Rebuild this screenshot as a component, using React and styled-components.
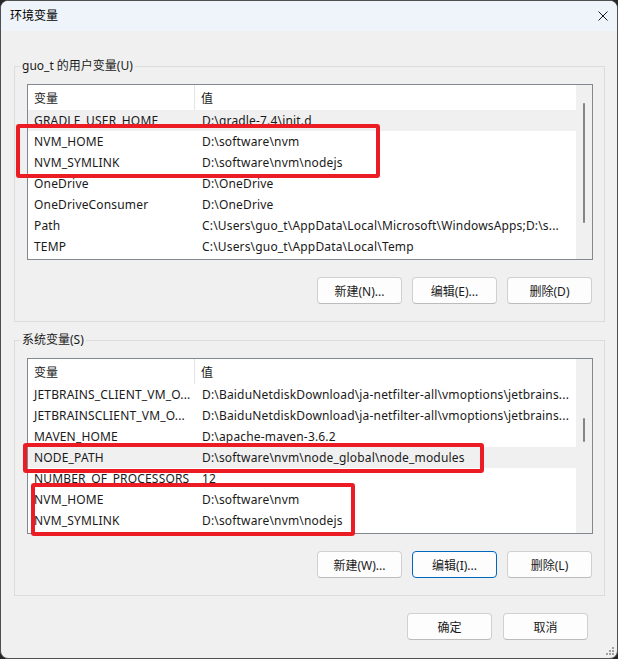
import React from "react";
import styled, { createGlobalStyle } from "styled-components";

const GlobalStyle = createGlobalStyle`
html, body {
    margin:0;
    padding:0;
    background:#262626;
}
body {
    font-family:"Noto Sans", "Noto Sans CJK SC", sans-serif;
    font-size:12px;
    color:#1a1a1a;
}
`;

const Window = styled.div`
position:relative;
box-sizing:border-box;
width:618px;
height:659px;
border:1px solid #4f4f4f;
border-radius:8px;
background:#f0f0f0;
overflow:hidden;
display:flex;
flex-direction:column;
`;

const TitleBar = styled.div`
height:30px;
flex:none;
background:#eef4f9;
display:flex;
align-items:center;
justify-content:space-between;
padding:0 9px;
`;

const Title = styled.span`
font-size:12px;
line-height:16px;
color:#000;
`;

const Content = styled.div`
padding:27px 12px 0 13px;
display:flex;
flex-direction:column;
`;

const Group = styled.fieldset`
margin:${({$gap})=>$gap}px 0 0 0;
padding:0;
min-width:0;
border:1px solid #dcdcdc;
`;

const Legend = styled.legend`
margin-left:5px;
padding:0 2px;
font-size:12px;
line-height:16px;
color:#1a1a1a;
`;

const GroupBody = styled.div`
padding:10px 11px 17px 12px;
display:flex;
flex-direction:column;
`;

const List = styled.div`
box-sizing:border-box;
height:176px;
border:1px solid #828790;
background:#fff;
display:flex;
`;

const ListArea = styled.div`
flex:1;
overflow:hidden;
`;

const Header = styled.div`
height:25px;
display:grid;
grid-template-columns:167px 1fr;
align-items:stretch;
`;

const HeaderCell = styled.div`
display:flex;
align-items:center;
padding-left:6px;
border-right:${({$divider})=>$divider?'1px solid #e5e5e5':'none'};
`;

const Row = styled.div`
height:21px;
display:grid;
grid-template-columns:168px 1fr;
align-items:center;
background:${({$active})=>$active?'#f0f0f0':'transparent'};
`;

const Cell = styled.span`
padding-left:6px;
white-space:nowrap;
overflow:hidden;
line-height:21px;
letter-spacing:0.17px;
`;

const ScrollTrack = styled.div`
width:16px;
flex:none;
background:#f0f0f0;
`;

const Thumb = styled.div`
width:2px;
margin:${({$top})=>$top}px auto 0;
height:${({$size})=>$size}px;
border-radius:1px;
background:#858585;
`;

const ButtonRow = styled.div`
display:flex;
justify-content:flex-end;
gap:${({$gap})=>$gap||10}px;
margin-top:17px;
padding-right:${({$right})=>$right||1}px;
`;

const Button = styled.button`
box-sizing:border-box;
width:85px;
height:27px;
padding:0;
font-family:inherit;
font-size:12px;
color:#1a1a1a;
background:#fdfdfd;
border:1px solid ${({$focus})=>$focus?'#0067c0':'#d0d0d0'};
border-bottom-color:${({$focus})=>$focus?'#0067c0':'#bcbcbc'};
border-radius:4px;
`;

const Footer = styled(ButtonRow)`
margin-top:17px;
`;

const Mark = styled.div`
position:absolute;
box-sizing:border-box;
left:${({$x})=>$x-1}px;
top:${({$y})=>$y-1}px;
width:${({$w})=>$w}px;
height:${({$h})=>$h}px;
border:4px solid #ec1c24;
border-radius:3px;
pointer-events:none;
`;

const Grip = styled.svg`
position:absolute;
right:2px;
bottom:2px;
`;

const userVars = [
    ['GRADLE_USER_HOME', 'D:\\gradle-7.4\\init.d', true],
    ['NVM_HOME', 'D:\\software\\nvm'],
    ['NVM_SYMLINK', 'D:\\software\\nvm\\nodejs'],
    ['OneDrive', 'D:\\OneDrive'],
    ['OneDriveConsumer', 'D:\\OneDrive'],
    ['Path', 'C:\\Users\\guo_t\\AppData\\Local\\Microsoft\\WindowsApps;D:\\s...'],
    ['TEMP', 'C:\\Users\\guo_t\\AppData\\Local\\Temp'],
];

const sysVars = [
    ['JETBRAINS_CLIENT_VM_O...', 'D:\\BaiduNetdiskDownload\\ja-netfilter-all\\vmoptions\\jetbrains...'],
    ['JETBRAINSCLIENT_VM_O...', 'D:\\BaiduNetdiskDownload\\ja-netfilter-all\\vmoptions\\jetbrains...'],
    ['MAVEN_HOME', 'D:\\apache-maven-3.6.2'],
    ['NODE_PATH', 'D:\\software\\nvm\\node_global\\node_modules', true],
    ['NUMBER_OF_PROCESSORS', '12'],
    ['NVM_HOME', 'D:\\software\\nvm'],
    ['NVM_SYMLINK', 'D:\\software\\nvm\\nodejs'],
];

const VarList = ({rows, thumbTop, thumbSize}) => {
    return(
        <List>
            <ListArea>
                <Header>
                    <HeaderCell $divider>变量</HeaderCell>
                    <HeaderCell>值</HeaderCell>
                </Header>
                {rows.map(([name, value, active]) => (
                    <Row key={name + value} $active={active}>
                        <Cell>{name}</Cell>
                        <Cell>{value}</Cell>
                    </Row>
                ))}
            </ListArea>
            <ScrollTrack>
                <Thumb $top={thumbTop} $size={thumbSize}/>
            </ScrollTrack>
        </List>
    );
}

const VarGroup = ({label, rows, thumbTop, thumbSize, buttons, gap}) => {
    return(
        <Group $gap={gap}>
            <Legend>{label}</Legend>
            <GroupBody>
                <VarList rows={rows} thumbTop={thumbTop} thumbSize={thumbSize}/>
                <ButtonRow>
                    {buttons.map(([text, focus]) => (
                        <Button key={text} $focus={focus}>{text}</Button>
                    ))}
                </ButtonRow>
            </GroupBody>
        </Group>
    );
}

const App = () => {
    return(
        <>
            <GlobalStyle/>
            <Window>
                <TitleBar>
                    <Title>环境变量</Title>
                    <svg width="10" height="10" viewBox="0 0 10 10">
                        <path d="M0.5 0.5 L9.5 9.5 M9.5 0.5 L0.5 9.5" stroke="#1a1a1a" strokeWidth="1" fill="none"/>
                    </svg>
                </TitleBar>
                <Content>
                    <VarGroup
                        gap={0}
                        label="guo_t 的用户变量(U)"
                        rows={userVars}
                        thumbTop={18}
                        thumbSize={120}
                        buttons={[['新建(N)...'], ['编辑(E)...'], ['删除(D)']]}
                    />
                    <VarGroup
                        gap={10}
                        label="系统变量(S)"
                        rows={sysVars}
                        thumbTop={59}
                        thumbSize={24}
                        buttons={[['新建(W)...'], ['编辑(I)...', true], ['删除(L)']]}
                    />
                    <Footer $gap={11} $right={17}>
                        <Button>确定</Button>
                        <Button>取消</Button>
                    </Footer>
                </Content>
                <Mark $x={16} $y={124} $w={364} $h={54}/>
                <Mark $x={23} $y={443} $w={461} $h={30}/>
                <Mark $x={31} $y={483} $w={324} $h={53}/>
                <Grip width="9" height="9" viewBox="0 0 9 9">
                    <g fill="#a0a0a0">
                        <rect x="6" y="0" width="2" height="2"/>
                        <rect x="3" y="3" width="2" height="2"/>
                        <rect x="6" y="3" width="2" height="2"/>
                        <rect x="0" y="6" width="2" height="2"/>
                        <rect x="3" y="6" width="2" height="2"/>
                        <rect x="6" y="6" width="2" height="2"/>
                    </g>
                </Grip>
            </Window>
        </>
    );
}

export default App;
